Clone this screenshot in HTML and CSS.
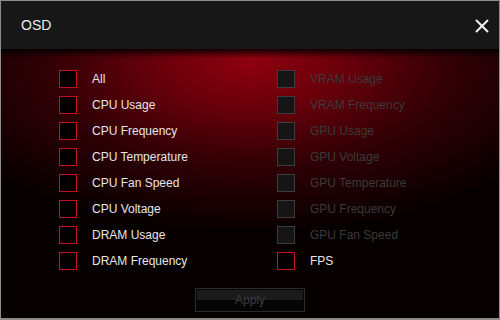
FILE: index.html
```html
<!DOCTYPE html>
<html lang="en">
<head>
    <meta charset="UTF-8">
    <meta name="viewport" content="width=device-width, initial-scale=1.0">
    <title>OSD</title>
    <link rel="stylesheet" href="styles.css">
</head>
<body>
    <div class="window">
        <div class="header">
            <div class="title">OSD</div>
            <button class="close" aria-label="Close">
                <svg width="14" height="14" viewBox="0 0 14 14">
                    <path d="M1 1 L13 13 M13 1 L1 13" stroke="#f2f2f2" stroke-width="2" fill="none"/>
                </svg>
            </button>
        </div>
        <div class="content">
            <div class="options">
                <div class="column">
                    <label class="option"><span class="box"></span>All</label>
                    <label class="option"><span class="box"></span>CPU Usage</label>
                    <label class="option"><span class="box"></span>CPU Frequency</label>
                    <label class="option"><span class="box"></span>CPU Temperature</label>
                    <label class="option"><span class="box"></span>CPU Fan Speed</label>
                    <label class="option"><span class="box"></span>CPU Voltage</label>
                    <label class="option"><span class="box"></span>DRAM Usage</label>
                    <label class="option"><span class="box"></span>DRAM Frequency</label>
                </div>
                <div class="column">
                    <label class="option disabled"><span class="box"></span>VRAM Usage</label>
                    <label class="option disabled"><span class="box"></span>VRAM Frequency</label>
                    <label class="option disabled"><span class="box"></span>GPU Usage</label>
                    <label class="option disabled"><span class="box"></span>GPU Voltage</label>
                    <label class="option disabled"><span class="box"></span>GPU Temperature</label>
                    <label class="option disabled"><span class="box"></span>GPU Frequency</label>
                    <label class="option disabled"><span class="box"></span>GPU Fan Speed</label>
                    <label class="option"><span class="box"></span>FPS</label>
                </div>
            </div>
            <button class="apply" disabled>Apply</button>
        </div>
    </div>
</body>
</html>
```
FILE: styles.css
```css
html, body {
    margin: 0;
    padding: 0;
    background: #000;
}

body {
    font-family: "Liberation Sans", Arial, sans-serif;
}

.window {
    width: 500px;
    height: 320px;
    box-sizing: border-box;
    border: 1px solid #8c8c8c;
    border-bottom-width: 2px;
    background: #050505;
    display: flex;
    flex-direction: column;
}

.header {
    height: 48px;
    flex: none;
    background: #171717;
    display: flex;
    align-items: center;
    justify-content: space-between;
    padding: 0 10px 0 20px;
}

.title {
    font-size: 14px;
    color: #ececec;
}

.close {
    background: none;
    border: none;
    padding: 0;
    margin-top: 2px;
    width: 14px;
    height: 14px;
    display: flex;
}

.content {
    flex: 1;
    display: flex;
    flex-direction: column;
    align-items: center;
    background:
        linear-gradient(to bottom, rgba(0, 0, 0, 0.85), rgba(0, 0, 0, 0) 9px),
        radial-gradient(ellipse 340px 170px at 250px 14px, #8e000f 0%, #6a000b 26%, #300005 60%, #070000 100%);
}

.options {
    align-self: stretch;
    display: flex;
    padding: 21px 0 0 58px;
}

.column {
    width: 218px;
    display: flex;
    flex-direction: column;
    gap: 8px;
}

.option {
    display: flex;
    align-items: center;
    height: 18px;
    font-size: 12px;
    color: #e6e6e6;
}

.box {
    width: 18px;
    height: 18px;
    box-sizing: border-box;
    border: 1px solid #c4121c;
    background: #050000;
    margin-right: 15px;
}

.option.disabled {
    color: #3a3a3a;
}

.option.disabled .box {
    border-color: #3c3c3c;
    background: #151515;
}

.apply {
    margin-top: 18px;
    width: 110px;
    height: 24px;
    border: 1px solid #2a2a2a;
    background: linear-gradient(#1b1b1b, #1b1b1b) 1px 1px / calc(100% - 2px) 10px no-repeat #050505;
    color: #3c3c3c;
    font-family: "Liberation Sans", Arial, sans-serif;
    font-size: 12px;
    padding: 0;
}
```
